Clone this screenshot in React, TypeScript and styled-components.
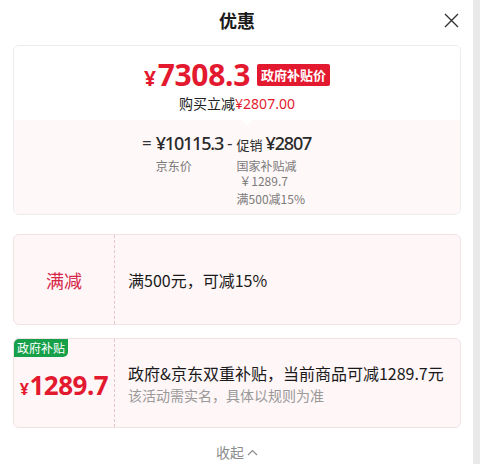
import React, { FC } from 'react';
import styled, { createGlobalStyle } from 'styled-components';

const GlobalStyle = createGlobalStyle`
  html, body {
    margin: 0;
    padding: 0;
    background: #fff;
  }
  body {
    font-family: 'Noto Sans', 'Noto Sans CJK SC', sans-serif;
    color: #1a1a1a;
  }
`;

const cjk = `'Noto Sans CJK SC', 'Noto Sans', sans-serif`;
const num = `'Noto Sans', 'Noto Sans CJK SC', sans-serif`;
const red = '#e3192f';

const Root = styled.div`
  display: flex;
  width: 480px;
  height: 464px;
  overflow: hidden;
`;

const Panel = styled.div`
  flex: 1;
  padding: 0 12px 0 13px;
  display: flex;
  flex-direction: column;
`;

const ScrollEdge = styled.div`
  width: 7px;
  background: #e9e9e9;
`;

const Header = styled.div`
  height: 40px;
  display: flex;
  align-items: center;
  justify-content: center;
  position: relative;
`;

const Title = styled.div`
  font-family: ${cjk};
  font-size: 18px;
  font-weight: 700;
  color: #1a1a1a;
`;

const Close = styled.svg`
  position: absolute;
  right: 2px;
  top: 13px;
`;

const Card = styled.div`
  margin-top: 5px;
  height: 170px;
  border: 1px solid #ececec;
  border-radius: 6px;
  box-sizing: border-box;
  display: flex;
  flex-direction: column;
  overflow: hidden;
`;

const Upper = styled.div`
  height: 74px;
  display: flex;
  flex-direction: column;
  align-items: center;
  padding-top: 11px;
  box-sizing: border-box;
  background: #fff;
  position: relative;
`;

const PriceRow = styled.div`
  display: flex;
  align-items: center;
  gap: 7px;
  height: 36px;
`;

const BigPrice = styled.div`
  color: ${red};
  font-family: ${num};
  font-weight: 700;
  font-size: 30px;
  letter-spacing: -0.3px;
  line-height: 1;
  span {
    font-size: 21px;
    margin-right: 2px;
  }
`;

const RedTag = styled.div`
  background: ${red};
  color: #fff;
  font-family: ${cjk};
  font-weight: 700;
  font-size: 13px;
  line-height: 22px;
  padding: 0 4px;
  border-radius: 2px;
`;

const Saving = styled.div`
  font-family: ${cjk};
  font-size: 14px;
  color: #222;
  line-height: 20px;
  em {
    font-style: normal;
    color: ${red};
    font-family: ${num};
  }
`;

const Notch = styled.div`
  position: absolute;
  bottom: -5px;
  left: 227px;
  width: 0;
  height: 0;
  border-left: 6px solid transparent;
  border-right: 6px solid transparent;
  border-top: 6px solid #fff;
  z-index: 1;
`;

const Lower = styled.div`
  flex: 1;
  background: #fff8f8;
  display: flex;
  padding: 11px 0 0 128px;
  gap: 4px;
  align-items: flex-start;
`;

const Op = styled.div`
  font-family: ${num};
  font-size: 17px;
  line-height: 24px;
  color: #333;
`;

const Col = styled.div`
  display: flex;
  flex-direction: column;
`;

const Amount = styled.div`
  height: 24px;
  font-family: ${num};
  font-size: 18px;
  font-weight: 500;
  letter-spacing: -1.2px;
  line-height: 24px;
  color: #2a2a2a;
  small {
    font-family: ${cjk};
    font-size: 13px;
    line-height: 1;
    font-weight: 400;
    letter-spacing: 0;
    margin-right: 3px;
  }
`;

const Note = styled.div<{ gapTop?: number }>`
  font-family: ${cjk};
  font-size: 12px;
  line-height: 15px;
  color: #7a7a7a;
  margin-top: ${({ gapTop }) => gapTop ?? 0}px;
`;

const Promo = styled.div<{ top: number; h: number }>`
  margin-top: ${({ top }) => top}px;
  height: ${({ h }) => h}px;
  box-sizing: border-box;
  border: 1px solid #f1e2e4;
  border-radius: 6px;
  background: #fff6f7;
  display: flex;
  position: relative;
`;

const PromoLeft = styled.div`
  width: 100px;
  border-right: 1px dashed #e6c5cb;
  display: flex;
  align-items: center;
  justify-content: center;
`;

const PromoName = styled.div`
  font-family: ${cjk};
  font-size: 18px;
  color: #d62649;
`;

const PromoAmount = styled.div`
  font-family: ${num};
  color: ${red};
  font-weight: 700;
  font-size: 26px;
  letter-spacing: -0.5px;
  margin-top: 4px;
  span {
    font-size: 16px;
    margin-right: 1px;
  }
`;

const PromoBody = styled.div`
  flex: 1;
  display: flex;
  flex-direction: column;
  justify-content: center;
  gap: 1px;
  padding-left: 13px;
`;

const PromoText = styled.div`
  font-family: ${cjk};
  font-size: 16px;
  line-height: 22px;
  color: #1a1a1a;
`;

const PromoSub = styled.div`
  font-family: ${cjk};
  font-size: 14px;
  line-height: 20px;
  color: #999;
`;

const GreenTag = styled.div`
  position: absolute;
  left: 0;
  top: 0;
  background: #16a049;
  color: #fff;
  font-family: ${cjk};
  font-size: 12px;
  line-height: 18px;
  padding: 0 3px;
  border-radius: 5px 0 5px 0;
`;

const Collapse = styled.div`
  margin-top: 14px;
  display: flex;
  justify-content: center;
  align-items: center;
  gap: 3px;
  font-family: ${cjk};
  font-size: 14px;
  color: #8c8c8c;
`;

const App: FC = () => (
  <Root>
    <GlobalStyle />
    <Panel>
      <Header>
        <Title>优惠</Title>
        <Close width="15" height="15" viewBox="0 0 15 15">
          <path d="M1 1L14 14M14 1L1 14" stroke="#333" strokeWidth="1.4" fill="none" />
        </Close>
      </Header>

      <Card>
        <Upper>
          <PriceRow>
            <BigPrice>
              <span>¥</span>7308.3
            </BigPrice>
            <RedTag>政府补贴价</RedTag>
          </PriceRow>
          <Saving>
            购买立减<em>¥2807.00</em>
          </Saving>
          <Notch />
        </Upper>
        <Lower>
          <Op>=</Op>
          <Col>
            <Amount>¥10115.3</Amount>
            <Note gapTop={3}>京东价</Note>
          </Col>
          <Op>-</Op>
          <Col>
            <Amount>
              <small>促销</small>¥2807
            </Amount>
            <Note gapTop={3}>国家补贴减</Note>
            <Note>&nbsp;￥1289.7</Note>
            <Note gapTop={3}>满500减15%</Note>
          </Col>
        </Lower>
      </Card>

      <Promo top={19} h={91}>
        <PromoLeft>
          <PromoName>满减</PromoName>
        </PromoLeft>
        <PromoBody>
          <PromoText>满500元，可减15%</PromoText>
        </PromoBody>
      </Promo>

      <Promo top={13} h={90}>
        <GreenTag>政府补贴</GreenTag>
        <PromoLeft>
          <PromoAmount>
            <span>¥</span>1289.7
          </PromoAmount>
        </PromoLeft>
        <PromoBody>
          <PromoText>政府&amp;京东双重补贴，当前商品可减1289.7元</PromoText>
          <PromoSub>该活动需实名，具体以规则为准</PromoSub>
        </PromoBody>
      </Promo>

      <Collapse>
        收起
        <svg width="11" height="7" viewBox="0 0 11 7">
          <path d="M1 6L5.5 1.5L10 6" stroke="#8c8c8c" strokeWidth="1.2" fill="none" />
        </svg>
      </Collapse>
    </Panel>
    <ScrollEdge />
  </Root>
);

export default App;
